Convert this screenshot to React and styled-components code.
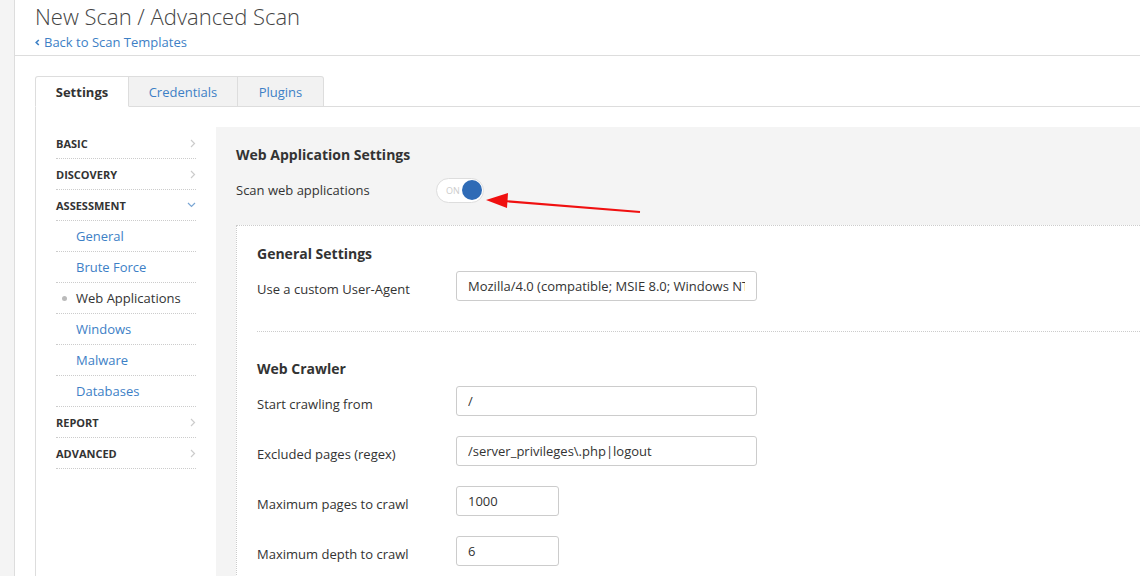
import React from 'react';
import styled, { createGlobalStyle } from 'styled-components';

const GlobalStyle = createGlobalStyle`
  html, body {
    margin: 0;
    padding: 0;
    background: #fff;
  }
  body {
    font-family: 'Open Sans', 'Noto Sans', sans-serif;
    font-size: 13px;
    color: #333;
    overflow: hidden;
  }
`;

const BLUE = '#3d80c6';

const Page = styled.div`
  display: flex;
  height: 576px;
  overflow: hidden;
  position: relative;
`;

const Rail = styled.div`
  width: 14px;
  flex-shrink: 0;
  background: #f4f4f4;
  border-right: 1px solid #ddd;
`;

const Main = styled.div`
  flex: 1;
  min-width: 0;
`;

const Header = styled.div`
  height: 55px;
  padding: 0 20px;
  border-bottom: 1px solid #ddd;
`;

const Title = styled.h1`
  margin: 0;
  padding-top: 1px;
  font-size: 22px;
  font-weight: 300;
  line-height: 30px;
  color: #444;
`;

const BackLink = styled.a`
  display: inline-flex;
  align-items: center;
  gap: 4px;
  margin-top: 3px;
  font-size: 13px;
  color: ${BLUE};
  text-decoration: none;
  line-height: 16px;
`;

const TabsBar = styled.div`
  display: flex;
  margin: 20px 0 0 20px;
  height: 31px;
`;

const Tab = styled.div`
  display: flex;
  align-items: center;
  justify-content: center;
  width: ${p => p.$w}px;
  box-sizing: border-box;
  font-size: 13px;
  font-weight: ${p => (p.$active ? 700 : 400)};
  color: ${p => (p.$active ? '#333' : BLUE)};
  background: ${p => (p.$active ? '#fff' : '#f2f2f2')};
  border: 1px solid #ddd;
  border-left-width: ${p => (p.$first ? 1 : 0)}px;
  border-bottom-color: ${p => (p.$active ? '#fff' : '#ddd')};
  border-radius: ${p => (p.$first ? '3px 0 0 0' : p.$last ? '0 3px 0 0' : '0')};
`;

const TabFill = styled.div`
  flex: 1;
  border-bottom: 1px solid #ddd;
`;

const Body = styled.div`
  display: flex;
  margin-left: 20px;
  padding-top: 20px;
  border-left: 1px solid #ddd;
  min-height: 450px;
`;

const Sidebar = styled.ul`
  list-style: none;
  margin: 0;
  padding: 1px 20px 0;
  width: 140px;
  flex-shrink: 0;
`;

const NavItem = styled.li`
  display: flex;
  align-items: center;
  height: 30px;
  border-bottom: 1px dotted #ccc;
  padding-left: ${p => (p.$sub ? 20 : 0)}px;
  position: relative;
  font-size: ${p => (p.$sub ? 13 : 11)}px;
  font-weight: ${p => (p.$sub ? 400 : 700)};
  color: ${p => (p.$sub && !p.$current ? BLUE : '#333')};
  text-transform: ${p => (p.$sub ? 'none' : 'uppercase')};
`;

const NavLabel = styled.span`
  flex: 1;
`;

const Bullet = styled.span`
  position: absolute;
  left: 6px;
  top: 13px;
  width: 5px;
  height: 5px;
  border-radius: 50%;
  background: #bbb;
`;

const Panel = styled.div`
  flex: 1;
  min-width: 0;
  background: #f4f4f4;
  padding: 19px 0 0 20px;
`;

const SectionTitle = styled.h3`
  margin: 0;
  font-size: 14px;
  font-weight: 700;
  line-height: 18px;
  color: #333;
`;

const ToggleRow = styled.div`
  display: flex;
  align-items: center;
  margin-top: 13px;
  height: 26px;
`;

const RowLabel = styled.div`
  width: ${p => p.$w}px;
  flex-shrink: 0;
  font-size: 13px;
  line-height: 18px;
  color: #333;
`;

const FieldLabel = styled(RowLabel)`
  align-self: flex-start;
  padding-top: 9px;
`;

const Toggle = styled.div`
  display: flex;
  align-items: center;
  justify-content: space-between;
  box-sizing: border-box;
  width: 48px;
  height: 25px;
  padding: 0 1px 0 9px;
  border: 1px solid #ddd;
  border-radius: 13px;
  background: #fff;
  font-size: 9px;
  color: #ccc;
`;

const Knob = styled.span`
  width: 20px;
  height: 20px;
  border-radius: 50%;
  background: #2f6bb6;
`;

const InnerBox = styled.div`
  margin-top: 22px;
  background: #fff;
  border-left: 1px dotted #ccc;
  border-top: 1px dotted #ccc;
  padding: 19px 0 30px 20px;
  min-height: 400px;
`;

const Group = styled.div`
  padding-bottom: ${p => (p.$sep ? 30 : 0)}px;
  border-bottom: ${p => (p.$sep ? '1px dotted #ccc' : 'none')};
  margin-bottom: ${p => (p.$sep ? 28 : 0)}px;
`;

const Fields = styled.div`
  display: flex;
  flex-direction: column;
  gap: 20px;
  margin-top: 8px;
`;

const Field = styled.div`
  display: flex;
  align-items: center;
`;

const Input = styled.input`
  box-sizing: border-box;
  width: ${p => p.$w}px;
  height: 30px;
  border: 1px solid #ccc;
  border-radius: 3px;
  padding: 0 11px;
  font-family: inherit;
  font-size: 13px;
  color: #333;
  background: #fff;
  outline: none;
`;

const Arrow = styled.svg`
  position: absolute;
  left: 480px;
  top: 188px;
  pointer-events: none;
`;

const ChevronRight = () => (
  <svg width="6" height="9" viewBox="0 0 6 9">
    <polyline points="1,1 4.5,4.5 1,8" fill="none" stroke="#ccc" strokeWidth="1.2" />
  </svg>
);

const ChevronDown = () => (
  <svg width="9" height="6" viewBox="0 0 9 6">
    <polyline points="1,1 4.5,4.5 8,1" fill="none" stroke="#7aa6d4" strokeWidth="1.2" />
  </svg>
);

const nav = [
  { label: 'Basic' },
  { label: 'Discovery' },
  { label: 'Assessment', open: true },
  { label: 'General', sub: true },
  { label: 'Brute Force', sub: true },
  { label: 'Web Applications', sub: true, current: true },
  { label: 'Windows', sub: true },
  { label: 'Malware', sub: true },
  { label: 'Databases', sub: true },
  { label: 'Report' },
  { label: 'Advanced' },
];

const crawler = [
  { label: 'Start crawling from', value: '/', w: 301 },
  { label: 'Excluded pages (regex)', value: '/server_privileges\\.php|logout', w: 301 },
  { label: 'Maximum pages to crawl', value: '1000', w: 103 },
  { label: 'Maximum depth to crawl', value: '6', w: 103 },
];

export default function App() {
  return (
    <>
      <GlobalStyle />
      <Page>
        <Rail />
        <Main>
          <Header>
            <Title>New Scan / Advanced Scan</Title>
            <BackLink href="#">
              <svg width="5" height="7" viewBox="0 0 5 7">
                <polyline points="3.8,1 1.2,3.5 3.8,6" fill="none" stroke={BLUE} strokeWidth="1.6" />
              </svg>
              Back to Scan Templates
            </BackLink>
          </Header>

          <TabsBar>
            <Tab $w={94} $active $first>Settings</Tab>
            <Tab $w={109}>Credentials</Tab>
            <Tab $w={86} $last>Plugins</Tab>
            <TabFill />
          </TabsBar>

          <Body>
            <Sidebar>
              {nav.map(item => (
                <NavItem key={item.label} $sub={item.sub} $current={item.current}>
                  {item.current && <Bullet />}
                  <NavLabel>{item.label}</NavLabel>
                  {!item.sub && (item.open ? <ChevronDown /> : <ChevronRight />)}
                </NavItem>
              ))}
            </Sidebar>

            <Panel>
              <SectionTitle>Web Application Settings</SectionTitle>
              <ToggleRow>
                <RowLabel $w={200}>Scan web applications</RowLabel>
                <Toggle>
                  ON
                  <Knob />
                </Toggle>
              </ToggleRow>

              <InnerBox>
                <Group $sep>
                  <SectionTitle>General Settings</SectionTitle>
                  <Fields>
                    <Field>
                      <FieldLabel $w={199}>Use a custom User-Agent</FieldLabel>
                      <Input
                        $w={301}
                        readOnly
                        value="Mozilla/4.0 (compatible; MSIE 8.0; Windows NT 5.1; Trident/4.0)"
                      />
                    </Field>
                  </Fields>
                </Group>

                <Group>
                  <SectionTitle>Web Crawler</SectionTitle>
                  <Fields>
                    {crawler.map(f => (
                      <Field key={f.label}>
                        <FieldLabel $w={199}>{f.label}</FieldLabel>
                        <Input $w={f.w} readOnly value={f.value} />
                      </Field>
                    ))}
                  </Fields>
                </Group>
              </InnerBox>
            </Panel>
          </Body>
        </Main>

        <Arrow width="170" height="30" viewBox="0 0 170 30">
          <line x1="160" y1="24" x2="24" y2="13" stroke="#f01010" strokeWidth="2.2" />
          <polygon points="6,12 28,5 27,20" fill="#f01010" />
        </Arrow>
      </Page>
    </>
  );
}
